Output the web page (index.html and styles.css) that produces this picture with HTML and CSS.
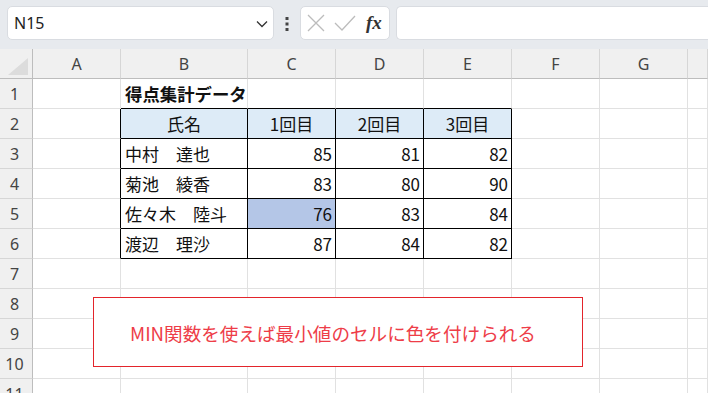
FILE: index.html
```html
<!DOCTYPE html>
<html lang="ja">
<head>
<meta charset="utf-8">
<title>Sheet</title>
<link rel="stylesheet" href="styles.css">
</head>
<body>
<div class="app">
  <div class="topbar">
    <div class="namebox">
      <span class="nb-text">N15</span>
      <svg class="chev" width="12" height="8" viewBox="0 0 12 8"><polyline points="1,1.5 6,6.5 11,1.5" fill="none" stroke="#333" stroke-width="1.3"/></svg>
    </div>
    <svg class="dots" width="4" height="14" viewBox="0 0 4 14"><rect x="0.5" y="0" width="3" height="3" fill="#444"/><rect x="0.5" y="5.5" width="3" height="3" fill="#444"/><rect x="0.5" y="11" width="3" height="3" fill="#444"/></svg>
    <div class="fxbox">
      <svg width="18" height="18" viewBox="0 0 18 18"><path d="M1 1 L17 17 M17 1 L1 17" stroke="#bcbcbc" stroke-width="1.3" fill="none"/></svg>
      <svg width="22" height="18" viewBox="0 0 22 18"><path d="M1 9 L8 16 L21 2" stroke="#bcbcbc" stroke-width="1.3" fill="none"/></svg>
      <span class="fx">fx</span>
    </div>
    <div class="input"></div>
  </div>

  <div class="sheet">
    <div class="corner"><div class="tri"></div></div>
    <div class="ch">A</div><div class="ch">B</div><div class="ch">C</div><div class="ch">D</div><div class="ch">E</div><div class="ch">F</div><div class="ch">G</div><div class="ch last"></div>

    <div class="rh">1</div>
    <div class="c"></div><div class="c tt title">得点集計データ</div><div class="c tt"></div><div class="c tt"></div><div class="c tt"></div><div class="c"></div><div class="c"></div><div class="c"></div>

    <div class="rh">2</div>
    <div class="c tl"></div><div class="c t hd">氏名</div><div class="c t hd">1回目</div><div class="c t hd">2回目</div><div class="c t hd">3回目</div><div class="c"></div><div class="c"></div><div class="c"></div>

    <div class="rh">3</div>
    <div class="c tl"></div><div class="c t name">中村　達也</div><div class="c t num">85</div><div class="c t num">81</div><div class="c t num">82</div><div class="c"></div><div class="c"></div><div class="c"></div>

    <div class="rh">4</div>
    <div class="c tl"></div><div class="c t name">菊池　綾香</div><div class="c t num">83</div><div class="c t num">80</div><div class="c t num">90</div><div class="c"></div><div class="c"></div><div class="c"></div>

    <div class="rh">5</div>
    <div class="c tl"></div><div class="c t name">佐々木　陸斗</div><div class="c t num min">76</div><div class="c t num">83</div><div class="c t num">84</div><div class="c"></div><div class="c"></div><div class="c"></div>

    <div class="rh">6</div>
    <div class="c tl"></div><div class="c t name">渡辺　理沙</div><div class="c t num">87</div><div class="c t num">84</div><div class="c t num">82</div><div class="c"></div><div class="c"></div><div class="c"></div>

    <div class="rh">7</div>
    <div class="c"></div><div class="c"></div><div class="c"></div><div class="c"></div><div class="c"></div><div class="c"></div><div class="c"></div><div class="c"></div>

    <div class="rh">8</div>
    <div class="c"></div><div class="c"></div><div class="c"></div><div class="c"></div><div class="c"></div><div class="c"></div><div class="c"></div><div class="c"></div>

    <div class="rh">9</div>
    <div class="c"></div><div class="c"></div><div class="c"></div><div class="c"></div><div class="c"></div><div class="c"></div><div class="c"></div><div class="c"></div>

    <div class="rh">10</div>
    <div class="c"></div><div class="c"></div><div class="c"></div><div class="c"></div><div class="c"></div><div class="c"></div><div class="c"></div><div class="c"></div>

    <div class="rh">11</div>
    <div class="c"></div><div class="c"></div><div class="c"></div><div class="c"></div><div class="c"></div><div class="c"></div><div class="c"></div><div class="c"></div>

    <div class="callout">MIN関数を使えば最小値のセルに色を付けられる</div>
  </div>
</div>
</body>
</html>
```

FILE: styles.css
```css
* { box-sizing: border-box; }
html, body { margin: 0; padding: 0; background: #fff; }
body {
  width: 708px;
  height: 393px;
  overflow: hidden;
  font-family: "Noto Sans CJK JP", "Noto Sans", sans-serif;
}
.app { width: 708px; }

.topbar {
  height: 49px;
  background: #e7eaee;
  display: flex;
  align-items: flex-start;
  padding: 6px 0 0 7px;
  overflow: hidden;
}
.namebox {
  width: 267px;
  height: 34px;
  background: #fff;
  border: 1px solid #d9dce1;
  border-radius: 5px;
  display: flex;
  align-items: center;
  justify-content: space-between;
  padding: 0 5px 0 6px;
}
.nb-text {
  font-family: "Noto Sans", sans-serif;
  font-size: 16px;
  color: #222;
}
.chev { margin-top: 1px; }
.dots { margin: 11px 0 0 11px; }
.fxbox {
  margin-left: 11px;
  width: 90px;
  height: 34px;
  background: #fff;
  border: 1px solid #d9dce1;
  border-radius: 5px;
  display: flex;
  align-items: center;
  padding: 0 0 0 6px;
  gap: 9px;
}
.fx {
  font-family: "Liberation Serif", "DejaVu Serif", serif;
  font-style: italic;
  font-weight: bold;
  font-size: 19px;
  color: #333;
  margin-left: 1px;
}
.input {
  margin-left: 6px;
  flex: 1;
  height: 34px;
  background: #fff;
  border: 1px solid #d9dce1;
  border-right: none;
  border-radius: 5px 0 0 5px;
}

.sheet {
  position: relative;
  display: grid;
  grid-template-columns: 33px 88px 127px 88px 88px 88px 88px 88px 20px;
  grid-auto-rows: 30px;
}
.corner {
  background: #f0f0f0;
  border-right: 1px solid #bdbdbd;
  border-bottom: 1px solid #bdbdbd;
  position: relative;
}
.tri {
  position: absolute;
  left: 8px;
  top: 9px;
  width: 20px;
  height: 17px;
  background: #dcdcdc;
  clip-path: polygon(100% 0, 100% 100%, 0 100%);
}
.ch {
  background: #f0f0f0;
  border-right: 1px solid #d6d6d6;
  border-bottom: 1px solid #bdbdbd;
  display: flex;
  align-items: center;
  justify-content: center;
  font-family: "Noto Sans", sans-serif;
  font-size: 16px;
  color: #444;
}
.rh {
  background: #f0f0f0;
  border-right: 1px solid #bdbdbd;
  border-bottom: 1px solid #d6d6d6;
  display: flex;
  align-items: center;
  justify-content: center;
  padding-right: 3px;
  font-family: "Noto Sans", sans-serif;
  font-size: 16px;
  color: #444;
}
.c {
  border-right: 1px solid #e1e1e1;
  border-bottom: 1px solid #e1e1e1;
  display: flex;
  align-items: center;
  white-space: nowrap;
  font-size: 17px;
  color: #111;
  padding: 0 4px;
}
.tt { border-bottom-color: #000; }
.tl { border-right-color: #000; }
.t { border-right-color: #000; border-bottom-color: #000; }
.title { font-weight: bold; font-size: 17.4px; }
.hd { background: #ddebf7; justify-content: center; }
.num { justify-content: flex-end; padding-right: 3px; }
.min { background: #b4c6e7; }

.callout {
  position: absolute;
  left: 93px;
  top: 248px;
  width: 490px;
  height: 70px;
  border: 1px solid #e3242b;
  background: #fff;
  display: flex;
  align-items: center;
  justify-content: center;
  padding-right: 10px;
  color: #ee3d48;
  font-size: 18.6px;
  font-weight: 400;
  font-family: "Noto Sans CJK JP", sans-serif;
}
```
